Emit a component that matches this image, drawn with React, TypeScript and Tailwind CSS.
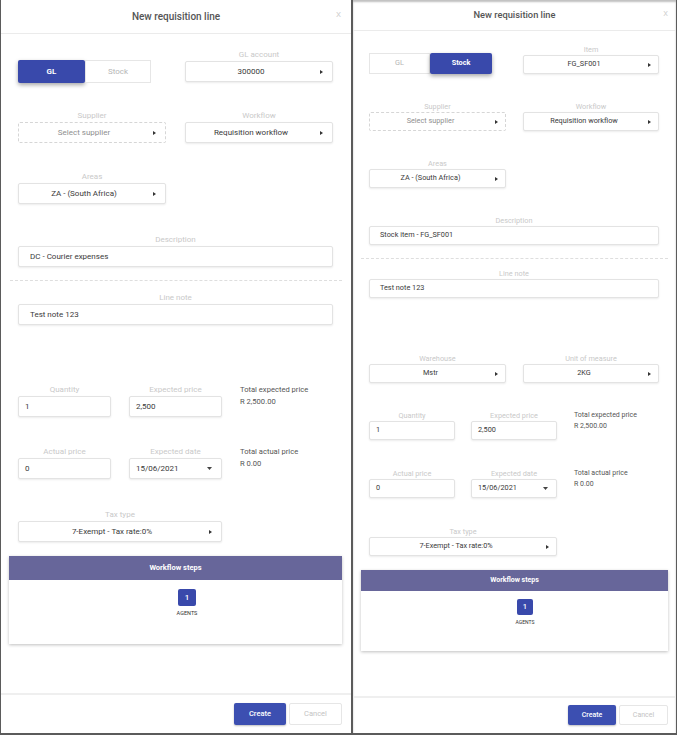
import React from "react";

const Arrow = () => (
  <svg width="3" height="4" viewBox="0 0 3 4" className="shrink-0">
    <path d="M0 0 L3 2 L0 4 Z" fill="#333" />
  </svg>
);

const Caret = () => (
  <svg width="5" height="3" viewBox="0 0 5 3" className="shrink-0">
    <path d="M0 0 L5 0 L2.5 3 Z" fill="#444" />
  </svg>
);

type Sz = "a" | "b";

function Label({ t, s }: { t: string; s: Sz }) {
  return (
    <div
      className={
        s === "a"
          ? "h-[12px] text-center text-[8px] leading-[12px] text-[#c9c9c9]"
          : "h-[11px] text-center text-[7.3px] leading-[11px] text-[#c9c9c9]"
      }
    >
      {t}
    </div>
  );
}

function Select({
  v,
  s,
  dashed,
  w,
}: {
  v: string;
  s: Sz;
  dashed?: boolean;
  w?: string;
}) {
  const base =
    s === "a" ? "h-[21px] text-[8px]" : "h-[19px] text-[7.3px]";
  const border = dashed
    ? "border border-dashed border-[#d6d6d6]"
    : "border border-[#e3e3e3] shadow-[0_1px_2px_rgba(0,0,0,0.08)]";
  return (
    <div
      className={`flex items-center rounded-[2px] bg-white ${base} ${border} ${w ?? ""}`}
    >
      <span
        className={`flex-1 text-center ${dashed ? "text-[#8f8f8f]" : "text-[#3a3a3a]"}`}
      >
        {v}
      </span>
      <span
        className={
          s === "a"
            ? "flex w-[16px] shrink-0 items-center pl-[4px]"
            : "flex w-[14px] shrink-0 items-center pl-[4px]"
        }
      >
        <Arrow />
      </span>
    </div>
  );
}

function Input({
  v,
  s,
  wide,
  caret,
}: {
  v: string;
  s: Sz;
  wide?: boolean;
  caret?: boolean;
}) {
  const base =
    s === "a" ? "h-[21px] text-[8px]" : "h-[19px] text-[7.3px]";
  const pad = wide
    ? s === "a"
      ? "pl-[11px]"
      : "pl-[10px]"
    : s === "a"
      ? "pl-[6px] pr-[9px]"
      : "pl-[6px] pr-[8px]";
  return (
    <div
      className={`flex items-center rounded-[2px] border border-[#e3e3e3] bg-white text-[#3a3a3a] shadow-[0_1px_2px_rgba(0,0,0,0.08)] ${base} ${pad}`}
    >
      <span className="flex-1">{v}</span>
      {caret && <Caret />}
    </div>
  );
}

function Field({
  label,
  s,
  children,
}: {
  label: string;
  s: Sz;
  children: React.ReactNode;
}) {
  return (
    <div className="flex flex-col">
      <Label t={label} s={s} />
      {children}
    </div>
  );
}

function Toggle({ s, active }: { s: Sz; active: "GL" | "Stock" }) {
  const on =
    "flex items-center justify-center rounded-[2px] bg-[#3949ab] font-bold text-white shadow-[0_2px_4px_rgba(0,0,0,0.35)]";
  const off =
    "flex items-center justify-center border border-[#e6e6e6] bg-white text-[#b5b5b5]";
  if (s === "a") {
    return (
      <div className="flex h-[23px] w-[133px] text-[8px]">
        <div className={`w-[67px] ${active === "GL" ? on : off}`}>GL</div>
        <div className={`w-[66px] ${active === "Stock" ? on : off}`}>Stock</div>
      </div>
    );
  }
  return (
    <div className="flex h-[21px] w-[123px] text-[7.3px]">
      <div className={`w-[61px] ${active === "GL" ? on : off}`}>GL</div>
      <div className={`w-[62px] ${active === "Stock" ? on : off}`}>Stock</div>
    </div>
  );
}

function Totals({ s, t, v }: { s: Sz; t: string; v: string }) {
  return (
    <div
      className={
        s === "a"
          ? "text-[7.6px] leading-[12px] text-[#555]"
          : "text-[7px] leading-[11px] text-[#555]"
      }
    >
      <div>{t}</div>
      <div>{v}</div>
    </div>
  );
}

function LeftPanel() {
  const s: Sz = "a";
  return (
    <div className="flex h-[733px] w-[350px] shrink-0 flex-col bg-white">
      <div className="relative flex h-[34px] shrink-0 items-center justify-center border-b border-[#ebebeb]">
        <span className="text-[10px] font-medium text-[#555]">
          New requisition line
        </span>
        <span className="absolute right-[10px] top-[10px] text-[8px] leading-[10px] text-[#cfcfcf]">
          X
        </span>
      </div>
      <div className="flex flex-1 flex-col pl-[17px] pr-[18px]">
        <div className="mt-[15px] grid grid-cols-2 items-end gap-x-[19px]">
          <div className="mb-[-1px]">
            <Toggle s={s} active="GL" />
          </div>
          <Field label="GL account" s={s}>
            <Select v="300000" s={s} />
          </Field>
        </div>
        <div className="mt-[28px] grid grid-cols-2 gap-x-[19px]">
          <Field label="Supplier" s={s}>
            <Select v="Select supplier" s={s} dashed />
          </Field>
          <Field label="Workflow" s={s}>
            <Select v="Requisition workflow" s={s} />
          </Field>
        </div>
        <div className="mt-[28px] grid grid-cols-2 gap-x-[19px]">
          <Field label="Areas" s={s}>
            <Select v="ZA - (South Africa)" s={s} />
          </Field>
        </div>
        <div className="mt-[30px]">
          <Field label="Description" s={s}>
            <Input v="DC - Courier expenses" s={s} wide />
          </Field>
        </div>
        <div className="ml-[-8px] mr-[-9px] mt-[13px] border-t border-dashed border-[#dedede]" />
        <div className="mt-[11px]">
          <Field label="Line note" s={s}>
            <Input v="Test note 123" s={s} wide />
          </Field>
        </div>
        <div className="mt-[59px] grid grid-cols-[93px_93px_1fr] gap-x-[18px]">
          <Field label="Quantity" s={s}>
            <Input v="1" s={s} />
          </Field>
          <Field label="Expected price" s={s}>
            <Input v="2,500" s={s} />
          </Field>
          <Totals s={s} t="Total expected price" v="R 2,500.00" />
        </div>
        <div className="mt-[29px] grid grid-cols-[93px_93px_1fr] gap-x-[18px]">
          <Field label="Actual price" s={s}>
            <Input v="0" s={s} />
          </Field>
          <Field label="Expected date" s={s}>
            <Input v="15/06/2021" s={s} caret />
          </Field>
          <Totals s={s} t="Total actual price" v="R 0.00" />
        </div>
        <div className="mt-[30px] w-[204px]">
          <Field label="Tax type" s={s}>
            <Select v="7-Exempt - Tax rate:0%" s={s} />
          </Field>
        </div>
        <div className="ml-[-9px] mr-[-9px] mt-[14px] bg-white shadow-[0_1px_3px_rgba(0,0,0,0.25)]">
          <div className="flex h-[24px] items-center justify-center bg-[#67669a] text-[7.5px] font-bold text-white">
            Workflow steps
          </div>
          <div className="flex h-[64px] flex-col items-center pl-[23px] pt-[9px]">
            <div className="flex h-[17px] w-[18px] items-center justify-center rounded-[2px] bg-[#3949ab] text-[8px] font-medium text-white">
              1
            </div>
            <div className="mt-[4px] text-[5.5px] leading-[6px] text-[#333]">
              AGENTS
            </div>
          </div>
        </div>
      </div>
      <div className="flex shrink-0 justify-end gap-[3px] border-t-2 border-[#efefef] pb-[8px] pr-[9px] pt-[8px]">
        <div className="flex h-[22px] w-[52px] items-center justify-center rounded-[2px] bg-[#3c4fb1] text-[7.5px] font-medium text-white shadow-[0_1px_2px_rgba(0,0,0,0.25)]">
          Create
        </div>
        <div className="flex h-[22px] w-[53px] items-center justify-center rounded-[2px] border border-[#e6e6e6] bg-white text-[7.5px] text-[#c3c3c3]">
          Cancel
        </div>
      </div>
    </div>
  );
}

function RightPanel() {
  const s: Sz = "b";
  return (
    <div className="flex h-[733px] w-[323px] shrink-0 flex-col bg-white shadow-[inset_0_2px_2px_rgba(0,0,0,0.25)]">
      <div className="relative flex h-[31px] shrink-0 items-center justify-center border-b border-[#ebebeb]">
        <span className="text-[9.3px] font-medium text-[#555]">
          New requisition line
        </span>
        <span className="absolute right-[8px] top-[9px] text-[7.5px] leading-[9px] text-[#cfcfcf]">
          X
        </span>
      </div>
      <div className="flex flex-1 flex-col pl-[16px] pr-[17px]">
        <div className="mt-[13px] grid grid-cols-[137px_136px] items-end gap-x-[17px]">
          <div>
            <Toggle s={s} active="Stock" />
          </div>
          <Field label="Item" s={s}>
            <Select v="FG_SF001" s={s} />
          </Field>
        </div>
        <div className="mt-[27px] grid grid-cols-[137px_136px] gap-x-[17px]">
          <Field label="Supplier" s={s}>
            <Select v="Select supplier" s={s} dashed />
          </Field>
          <Field label="Workflow" s={s}>
            <Select v="Requisition workflow" s={s} />
          </Field>
        </div>
        <div className="mt-[27px] grid grid-cols-[137px_136px] gap-x-[17px]">
          <Field label="Areas" s={s}>
            <Select v="ZA - (South Africa)" s={s} />
          </Field>
        </div>
        <div className="mt-[27px]">
          <Field label="Description" s={s}>
            <Input v="Stock item - FG_SF001" s={s} wide />
          </Field>
        </div>
        <div className="ml-[-8px] mr-[-9px] mt-[13px] border-t border-dashed border-[#dedede]" />
        <div className="mt-[9px]">
          <Field label="Line note" s={s}>
            <Input v="Test note 123" s={s} wide />
          </Field>
        </div>
        <div className="mt-[55px] grid grid-cols-[137px_136px] gap-x-[17px]">
          <Field label="Warehouse" s={s}>
            <Select v="Mstr" s={s} />
          </Field>
          <Field label="Unit of measure" s={s}>
            <Select v="2KG" s={s} />
          </Field>
        </div>
        <div className="mt-[27px] grid grid-cols-[86px_86px_1fr] gap-x-[16px]">
          <Field label="Quantity" s={s}>
            <Input v="1" s={s} />
          </Field>
          <Field label="Expected price" s={s}>
            <Input v="2,500" s={s} />
          </Field>
          <div className="pl-[1px]">
            <Totals s={s} t="Total expected price" v="R 2,500.00" />
          </div>
        </div>
        <div className="mt-[28px] grid grid-cols-[86px_86px_1fr] gap-x-[16px]">
          <Field label="Actual price" s={s}>
            <Input v="0" s={s} />
          </Field>
          <Field label="Expected date" s={s}>
            <Input v="15/06/2021" s={s} caret />
          </Field>
          <div className="pl-[1px]">
            <Totals s={s} t="Total actual price" v="R 0.00" />
          </div>
        </div>
        <div className="mt-[28px] w-[188px]">
          <Field label="Tax type" s={s}>
            <Select v="7-Exempt - Tax rate:0%" s={s} />
          </Field>
        </div>
        <div className="ml-[-8px] mr-[-9px] mt-[14px] bg-white shadow-[0_1px_3px_rgba(0,0,0,0.25)]">
          <div className="flex h-[21px] items-center justify-center bg-[#67669a] text-[7px] font-bold text-white">
            Workflow steps
          </div>
          <div className="flex h-[60px] flex-col items-center pl-[21px] pt-[8px]">
            <div className="flex h-[16px] w-[16px] items-center justify-center rounded-[2px] bg-[#3949ab] text-[7.5px] font-medium text-white">
              1
            </div>
            <div className="mt-[4px] text-[5px] leading-[6px] text-[#333]">
              AGENTS
            </div>
          </div>
        </div>
      </div>
      <div className="flex shrink-0 justify-end gap-[3px] border-t-2 border-[#efefef] pb-[8px] pr-[8px] pt-[7px]">
        <div className="flex h-[20px] w-[48px] items-center justify-center rounded-[2px] bg-[#3c4fb1] text-[7px] font-medium text-white shadow-[0_1px_2px_rgba(0,0,0,0.25)]">
          Create
        </div>
        <div className="flex h-[20px] w-[49px] items-center justify-center rounded-[2px] border border-[#e6e6e6] bg-white text-[7px] text-[#c3c3c3]">
          Cancel
        </div>
      </div>
    </div>
  );
}

export default function App() {
  return (
    <div className="flex h-[735px] w-[677px] gap-[2px] bg-[#5b5b5b] pl-[1px] font-['Roboto',sans-serif]">
      <LeftPanel />
      <RightPanel />
    </div>
  );
}
